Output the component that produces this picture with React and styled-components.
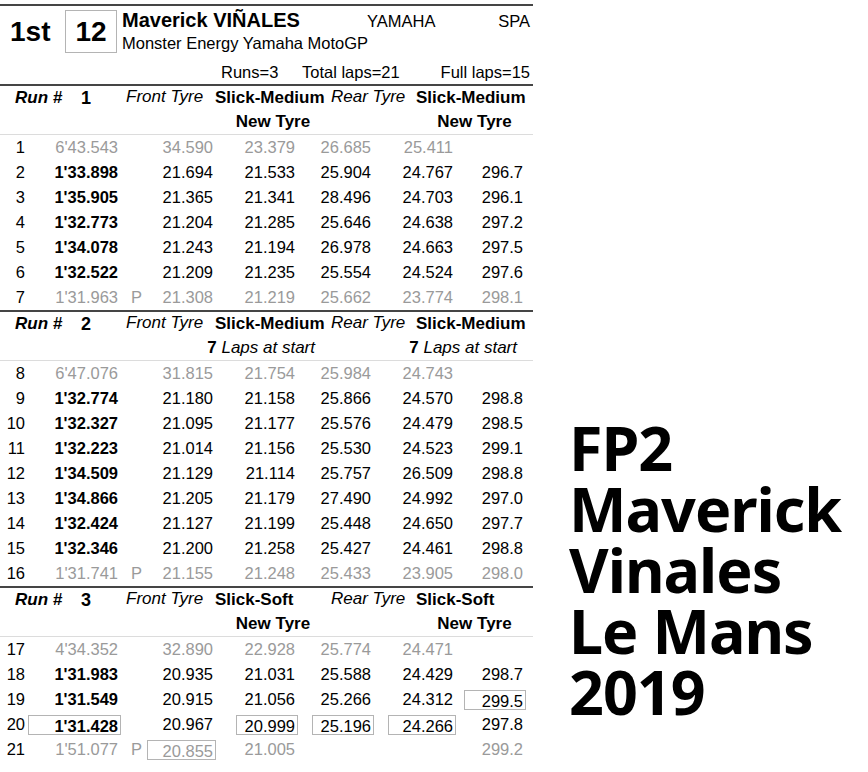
import React from 'react';
import styled, { createGlobalStyle } from 'styled-components';

// widths of the highlight boxes, per column
const BOX_WIDTHS = { time: 93, s1: 69, s2: 62, s3: 62, s4: 68, speed: 62 };
const SECTORS = ['s1', 's2', 's3', 's4', 'speed'];

const lap = (n, time, s1, s2, s3, s4, speed, opts = {}) => ({ n, time, s1, s2, s3, s4, speed, ...opts });

const runs = [
    {
        num: 1,
        front: 'Slick-Medium',
        rear: 'Slick-Medium',
        frontState: null,
        rearState: null,
        laps: [
            lap(1, "6'43.543", '34.590', '23.379', '26.685', '25.411', '', { grey: true }),
            lap(2, "1'33.898", '21.694', '21.533', '25.904', '24.767', '296.7'),
            lap(3, "1'35.905", '21.365', '21.341', '28.496', '24.703', '296.1'),
            lap(4, "1'32.773", '21.204', '21.285', '25.646', '24.638', '297.2'),
            lap(5, "1'34.078", '21.243', '21.194', '26.978', '24.663', '297.5'),
            lap(6, "1'32.522", '21.209', '21.235', '25.554', '24.524', '297.6'),
            lap(7, "1'31.963", '21.308', '21.219', '25.662', '23.774', '298.1', { grey: true, pit: true }),
        ],
    },
    {
        num: 2,
        front: 'Slick-Medium',
        rear: 'Slick-Medium',
        frontState: 7,
        rearState: 7,
        laps: [
            lap(8, "6'47.076", '31.815', '21.754', '25.984', '24.743', '', { grey: true }),
            lap(9, "1'32.774", '21.180', '21.158', '25.866', '24.570', '298.8'),
            lap(10, "1'32.327", '21.095', '21.177', '25.576', '24.479', '298.5'),
            lap(11, "1'32.223", '21.014', '21.156', '25.530', '24.523', '299.1'),
            lap(12, "1'34.509", '21.129', '21.114', '25.757', '26.509', '298.8'),
            lap(13, "1'34.866", '21.205', '21.179', '27.490', '24.992', '297.0'),
            lap(14, "1'32.424", '21.127', '21.199', '25.448', '24.650', '297.7'),
            lap(15, "1'32.346", '21.200', '21.258', '25.427', '24.461', '298.8'),
            lap(16, "1'31.741", '21.155', '21.248', '25.433', '23.905', '298.0', { grey: true, pit: true }),
        ],
    },
    {
        num: 3,
        front: 'Slick-Soft',
        rear: 'Slick-Soft',
        frontState: null,
        rearState: null,
        laps: [
            lap(17, "4'34.352", '32.890', '22.928', '25.774', '24.471', '', { grey: true }),
            lap(18, "1'31.983", '20.935', '21.031', '25.588', '24.429', '298.7'),
            lap(19, "1'31.549", '20.915', '21.056', '25.266', '24.312', '299.5', { boxed: ['speed'] }),
            lap(20, "1'31.428", '20.967', '20.999', '25.196', '24.266', '297.8', { boxed: ['time', 's2', 's3', 's4'] }),
            lap(21, "1'51.077", '20.855', '21.005', '', '', '299.2', { grey: true, pit: true, boxed: ['s1'] }),
        ],
    },
];

// col = the grid column of the tyre name this note sits under
const TyreState = ({ col, laps }) => {
    if (laps) {
        return (
            <StateCell $col={`${col - 1} / ${col + 1}`} $laps>
                <b>{laps}</b> <i>Laps at start</i>
            </StateCell>
        );
    }
    return <StateCell $col={col}><b>New Tyre</b></StateCell>;
};

const LapRow = ({ data }) => {
    const isBoxed = (k) => data.boxed && data.boxed.includes(k);
    const value = (k) => (isBoxed(k) ? <Boxed $w={BOX_WIDTHS[k]}>{data[k]}</Boxed> : data[k]);

    return (
        <Row $grey={data.grey}>
            <LapNo>{data.n}</LapNo>
            <Cell $bold={!data.grey}>{value('time')}</Cell>
            <Pit>{data.pit ? 'P' : ''}</Pit>
            {SECTORS.map((k) => (
                <Cell key={k}>{value(k)}</Cell>
            ))}
        </Row>
    );
};

const Run = ({ run }) => (
    <>
        <RunHead>
            <RunLabel>Run #</RunLabel>
            <RunNum>{run.num}</RunNum>
            <TyreLabel>Front Tyre</TyreLabel>
            <TyreName>{run.front}</TyreName>
            <TyreLabel>Rear Tyre</TyreLabel>
            <TyreName>{run.rear}</TyreName>
            <TyreState col={4} laps={run.frontState} />
            <TyreState col={6} laps={run.rearState} />
        </RunHead>
        <ThinRule />
        {run.laps.map((l) => (
            <LapRow key={l.n} data={l} />
        ))}
    </>
);

export default function App() {
    return (
        <>
            <GlobalStyle />
            <Page>
                <Sheet>
                    <Rule />
                    <Header>
                        <RiderLine>
                            <Place>1st</Place>
                            <NumBox>12</NumBox>
                            <Info>
                                <NameLine>
                                    <Name>Maverick VIÑALES</Name>
                                    <span>YAMAHA</span>
                                    <Nation>SPA</Nation>
                                </NameLine>
                                <Team>Monster Energy Yamaha MotoGP</Team>
                            </Info>
                        </RiderLine>
                        <Stats>
                            <Runs>Runs=3</Runs>
                            <Total>Total laps=21</Total>
                            <span>Full laps=15</span>
                        </Stats>
                    </Header>
                    {runs.map((run) => (
                        <React.Fragment key={run.num}>
                            <Rule />
                            <Run run={run} />
                        </React.Fragment>
                    ))}
                </Sheet>
                <Caption>
                    FP2<br />
                    Maverick<br />
                    Vinales<br />
                    Le Mans<br />
                    2019
                </Caption>
            </Page>
        </>
    );
}

const GlobalStyle = createGlobalStyle`
    html, body {
        margin: 0;
        background: #fff;
    }
    body {
        font-family: "Liberation Sans", Arial, sans-serif;
        color: #000;
    }
`;

const Page = styled.div`
    display: flex;
    align-items: flex-start;
    width: 868px;
    height: 772px;
    overflow: hidden;
`;

const Sheet = styled.div`
    width: 533px;
    flex-shrink: 0;
    padding-top: 4px;
`;

const Rule = styled.div`
    height: 2px;
    background: #454545;
`;

const ThinRule = styled.div`
    height: 1px;
    background: #dcdcdc;
`;

const Header = styled.div`
    display: flex;
    flex-direction: column;
    padding-right: 3px;
`;

const RiderLine = styled.div`
    display: flex;
    align-items: flex-start;
`;

const Place = styled.div`
    box-sizing: border-box;
    width: 65px;
    padding-left: 10px;
    margin-top: 4px;
    font-size: 28px;
    font-weight: 700;
    line-height: 43px;
`;

const NumBox = styled.div`
    box-sizing: border-box;
    width: 52px;
    height: 43px;
    margin-top: 4px;
    border: 1px solid #b4b4b4;
    text-align: center;
    font-size: 28px;
    font-weight: 700;
    line-height: 41px;
`;

const Info = styled.div`
    flex: 1;
    margin-left: 5px;
    padding-top: 3px;
`;

const NameLine = styled.div`
    display: flex;
    align-items: baseline;
    font-size: 16.5px;
    line-height: 23px;
`;

const Name = styled.span`
    width: 245px;
    font-size: 20px;
    font-weight: 700;
`;

const Nation = styled.span`
    margin-left: auto;
`;

const Team = styled.div`
    font-size: 16.5px;
    line-height: 20px;
`;

const Stats = styled.div`
    display: flex;
    margin: 9px 0 2px;
    padding-left: 221px;
    font-size: 16.5px;
    line-height: 20px;
`;

const Runs = styled.span`
    width: 81px;
`;

const Total = styled.span`
    flex: 1;
`;

const RunHead = styled.div`
    display: grid;
    grid-template-columns: 66px 45px 89px 116px 85px 117px;
    grid-template-rows: 24px 24px;
    padding-left: 15px;
    font-size: 17px;
    line-height: 24px;
    align-items: center;
`;

const RunLabel = styled.span`
    font-weight: 700;
    font-style: italic;
`;

const RunNum = styled.span`
    font-size: 18px;
    font-weight: 700;
`;

const TyreLabel = styled.span`
    font-style: italic;
    white-space: nowrap;
    margin-top: -3px;
`;

const TyreName = styled.span`
    font-weight: 700;
    white-space: nowrap;
`;

const StateCell = styled.span`
    grid-row: 2;
    grid-column: ${({ $col }) => $col};
    white-space: nowrap;
    text-align: ${({ $laps }) => ($laps ? 'right' : 'center')};
    padding-right: ${({ $laps }) => ($laps ? '16px' : '0')};

    i {
        font-weight: 400;
    }
`;

const Row = styled.div`
    display: grid;
    grid-template-columns: 28px 93px 26px 69px 82px 76px 82px 70px;
    height: 25px;
    align-items: center;
    font-size: 16.5px;
    line-height: 25px;
    color: ${({ $grey }) => ($grey ? '#9a9a9a' : '#000')};
`;

const LapNo = styled.span`
    color: #000;
    text-align: right;
    padding-right: 3px;
`;

const Cell = styled.span`
    display: flex;
    justify-content: flex-end;
    padding-right: 3px;
    font-weight: ${({ $bold }) => ($bold ? 700 : 400)};
`;

const Pit = styled.span`
    padding-left: 10px;
`;

const Boxed = styled.span`
    box-sizing: border-box;
    width: ${({ $w }) => $w}px;
    height: 20px;
    margin-right: -3px;
    padding-right: 2px;
    border: 1px solid #b4b4b4;
    text-align: right;
    line-height: 20px;
`;

const Caption = styled.div`
    margin: 417px 0 0 36px;
    font-family: "Noto Sans", "Open Sans", sans-serif;
    font-size: 61px;
    font-weight: 700;
    line-height: 61px;
    letter-spacing: -1px;
    white-space: nowrap;
    color: #000;
`;
